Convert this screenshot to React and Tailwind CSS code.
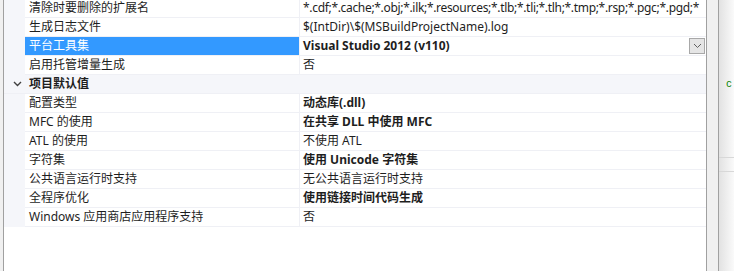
const rowsTop = [
  { name: "清除时要删除的扩展名", value: "*.cdf;*.cache;*.obj;*.ilk;*.resources;*.tlb;*.tli;*.tlh;*.tmp;*.rsp;*.pgc;*.pgd;*", tight: true },
  { name: "生成日志文件", value: "$(IntDir)\\$(MSBuildProjectName).log" },
  { name: "平台工具集", value: "Visual Studio 2012 (v110)", bold: true, selected: true },
  { name: "启用托管增量生成", value: "否" },
];

const rowsDefaults = [
  { name: "配置类型", value: "动态库(.dll)", bold: true },
  { name: "MFC 的使用", value: "在共享 DLL 中使用 MFC", bold: true },
  { name: "ATL 的使用", value: "不使用 ATL" },
  { name: "字符集", value: "使用 Unicode 字符集", bold: true },
  { name: "公共语言运行时支持", value: "无公共语言运行时支持" },
  { name: "全程序优化", value: "使用链接时间代码生成", bold: true },
  { name: "Windows 应用商店应用程序支持", value: "否" },
];

const PropRow = ({ name, value, bold, selected, tight }) => (
  <div className="flex h-[19px] shrink-0 bg-[#f5f6fa]">
    <div className="w-[21px] shrink-0" />
    <div
      className={`w-[274px] shrink-0 border-b border-[#eff0f5] pl-[4px] leading-[18px] whitespace-nowrap overflow-hidden ${
        selected ? "bg-[#3399ff] text-white" : "bg-white text-[#1e1e1e]"
      }`}
    >
      {name}
    </div>
    <div className="w-px shrink-0 bg-[#eff0f5]" />
    <div className="relative flex-1 min-w-0 bg-white border-b border-[#eff0f5] pl-[3px] leading-[18px] whitespace-nowrap overflow-hidden text-[#1e1e1e]">
      <span className={`${bold ? "font-bold" : ""} ${tight ? "tracking-[-0.32px]" : ""}`}>{value}</span>
      {selected && (
        <div className="absolute right-[1px] top-[1px] w-[16px] h-[16px] bg-[#e5e5e5] border border-[#a8a8a8] flex items-center justify-center">
          <svg width="9" height="6" viewBox="0 0 9 6">
            <path d="M1 1 L4.5 4.5 L8 1" stroke="#606060" strokeWidth="1" fill="none" />
          </svg>
        </div>
      )}
    </div>
  </div>
);

export default function App() {
  return (
    <div
      className="flex w-[734px] h-[271px] overflow-hidden bg-white text-[12px]"
      style={{ fontFamily: '"Noto Sans", "Noto Sans CJK SC", sans-serif' }}
    >
      {/* left edge */}
      <div className="w-[3px] shrink-0 bg-[#f0f0f0]" />
      <div className="w-px shrink-0 bg-[#a0a0a0]" />

      {/* property grid */}
      <div className="flex flex-col w-[702px] shrink-0 -mt-px">
        {rowsTop.map((r) => (
          <PropRow key={r.name} {...r} />
        ))}
        <div className="flex h-[19px] shrink-0 items-center bg-[#f5f6fa] border-b border-[#eff0f5]">
          <div className="w-[25px] shrink-0 flex justify-center pl-[1px]">
            <svg width="9" height="6" viewBox="0 0 9 6">
              <path d="M1 1 L4.5 4.5 L8 1" stroke="#404040" strokeWidth="1.4" fill="none" />
            </svg>
          </div>
          <span className="font-bold text-[#1e1e1e]">项目默认值</span>
        </div>
        {rowsDefaults.map((r) => (
          <PropRow key={r.name} {...r} />
        ))}
        <div className="flex-1 bg-white" />
      </div>

      {/* splitter */}
      <div className="w-px shrink-0 bg-[#a0a0a0]" />
      <div className="w-[11px] shrink-0 bg-[#f0f0f0]" />
      <div className="w-px shrink-0 bg-[#a0a0a0]" />

      {/* editor peek */}
      <div className="flex-1 flex flex-col bg-gradient-to-r from-[#e2e2e2] to-[#fafafa]">
        <div className="h-[80px]" />
        <div className="pl-[7px] text-[10px] leading-[10px] text-[#008000] font-mono">c</div>
        <div className="h-[67px]" />
        <div className="h-px bg-[#d8d8d8]" />
        <div className="h-[13px]" />
        <div className="h-px bg-[#d8d8d8]" />
      </div>
    </div>
  );
}
